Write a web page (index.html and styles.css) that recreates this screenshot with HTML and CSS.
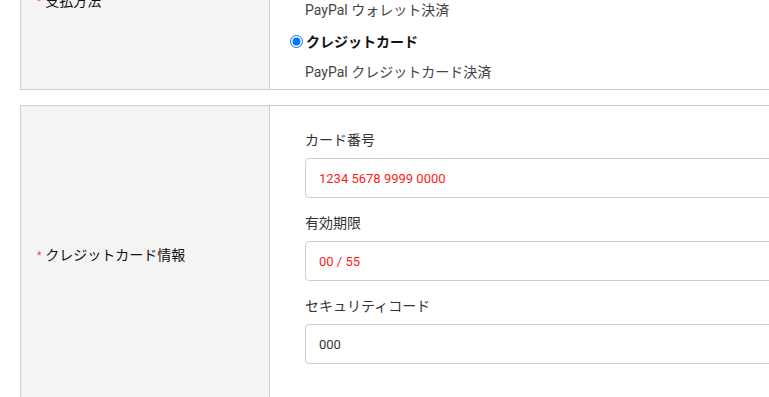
FILE: index.html
```html
<!DOCTYPE html>
<html lang="ja">

<head>
    <meta charset="UTF-8">
    <meta name="viewport" content="width=device-width, initial-scale=1.0">
    <title>お支払い</title>
    <link rel="stylesheet" href="styles.css">
</head>

<body>
    <div id="wrap">
        <div class="row row-pay">
            <div class="head"><span class="req">*</span>支払方法</div>
            <div class="body">
                <label class="opt"><input type="radio" name="pay">銀行振込</label>
                <p class="desc">銀行振込決済</p>
                <label class="opt"><input type="radio" name="pay">PayPal</label>
                <p class="desc">PayPal ウォレット決済</p>
                <label class="opt"><input type="radio" name="pay" checked>クレジットカード</label>
                <p class="desc">PayPal クレジットカード決済</p>
            </div>
        </div>

        <div class="row row-card">
            <div class="head"><span class="req">*</span>クレジットカード情報</div>
            <div class="body">
                <div class="field">
                    <p class="field-label">カード番号</p>
                    <input type="text" class="bad" value="1234 5678 9999 0000">
                </div>
                <div class="field">
                    <p class="field-label">有効期限</p>
                    <input type="text" class="bad" value="00 / 55">
                </div>
                <div class="field">
                    <p class="field-label">セキュリティコード</p>
                    <input type="text" value="000">
                </div>
            </div>
        </div>
    </div>
</body>

</html>
```

FILE: styles.css
```css
html,
body {
    margin: 0;
    overflow: hidden;
}

body {
    font-family: "Roboto", "Noto Sans CJK JP", sans-serif;
    font-size: 14px;
    color: #333;
    background: #fff;
}

p {
    margin: 0;
}

#wrap {
    width: 820px;
    padding-left: 20px;
    margin-top: -101px;
}

.row {
    display: grid;
    grid-template-columns: 249px 1fr;
    border: 1px solid #cfcfcf;
}

.row-card {
    margin-top: 15px;
    height: 296px;
}

.head {
    display: flex;
    align-items: center;
    padding-left: 16px;
    background: #f4f4f4;
    border-right: 1px solid #cfcfcf;
    color: #111;
}

.row-pay .head {
    padding-top: 10px;
}

.req {
    color: #f0386b;
    font-size: 10px;
    margin: 3px 4px 0 0;
}

.row-pay .body {
    padding: 7px 0 7px 20px;
}

.opt {
    display: flex;
    align-items: center;
    height: 20px;
    margin-bottom: 11px;
    font-weight: bold;
    color: #111;
}

.opt input {
    width: 13px;
    height: 13px;
    margin: 0 3px 0 0;
    accent-color: #0075ff;
}

.desc {
    line-height: 20px;
    margin-left: 15px;
    margin-bottom: 11px;
    color: #444;
}

.desc:last-child {
    margin-bottom: 0;
}

.row-card .body {
    padding: 25px 0 0 35px;
}

.field {
    margin-bottom: 16px;
}

.field-label {
    line-height: 18px;
    margin-bottom: 9px;
}

.field input {
    display: block;
    box-sizing: border-box;
    width: 520px;
    height: 40px;
    padding: 0 13px;
    border: 1px solid #cfcfcf;
    border-radius: 4px;
    font-family: "Roboto", sans-serif;
    font-size: 13px;
    color: #333;
    outline: none;
}

.field input.bad {
    color: #ff1a1a;
}
```
